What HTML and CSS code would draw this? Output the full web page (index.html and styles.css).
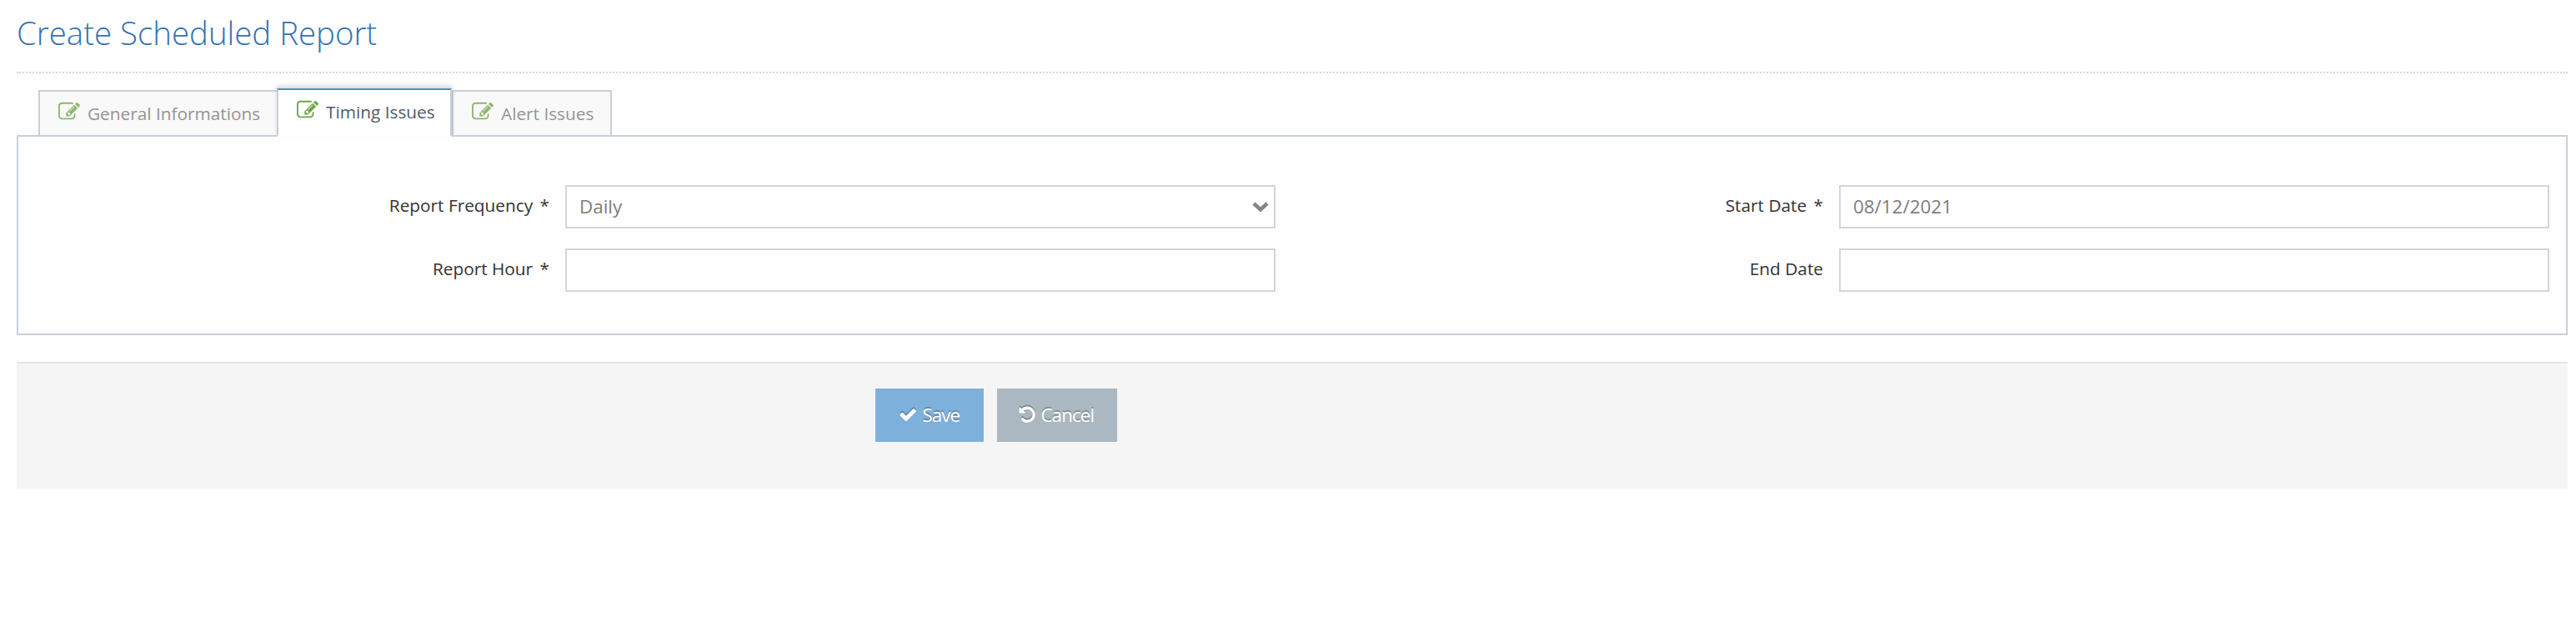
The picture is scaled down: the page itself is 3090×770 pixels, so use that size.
FILE: index.html
```html
<!DOCTYPE html>
<html lang="en">
<head>
<meta charset="utf-8">
<title>Create Scheduled Report</title>
<link rel="stylesheet" href="styles.css">
</head>
<body>
<svg class="sprite" aria-hidden="true">
  <symbol id="edit" viewBox="0 0 1792 1792"><path d="M888 1184l116-116-152-152-116 116v56h96v96h56zm440-720q-16-16-33 1l-350 350q-17 17-1 33t33-1l350-350q17-17 1-33zm80 594v190q0 119-84.500 203.500t-203.500 84.500h-832q-119 0-203.500-84.500t-84.500-203.500v-832q0-119 84.500-203.500t203.500-84.500h832q63 0 117 25 15 7 18 23 3 17-9 29l-49 49q-14 14-32 8-23-6-45-6h-832q-66 0-113 47t-47 113v832q0 66 47 113t113 47h832q66 0 113-47t47-113v-126q0-13 9-22l64-64q15-15 35-7t20 29zm-96-738l288 288-672 672h-288v-288zm444 132l-92 92-288-288 92-92q28-28 68-28t68 28l152 152q28 28 28 68t-28 68z"/></symbol>
  <symbol id="check" viewBox="0 0 1792 1792"><path d="M1671 566q0 40-28 68l-724 724-136 136q-28 28-68 28t-68-28l-136-136-362-362q-28-28-28-68t28-68l136-136q28-28 68-28t68 28l294 295 656-657q28-28 68-28t68 28l136 136q28 28 28 68z"/></symbol>
  <symbol id="undo" viewBox="0 0 1792 1792"><path d="M1664 896q0 156-61 298t-164 245-245 164-298 61q-172 0-327-72.500t-264-204.500q-7-10-6.500-22.500t8.500-20.500l137-138q10-9 25-9 16 2 23 12 73 95 179 147t225 52q104 0 198.500-40.500t163.500-109.500 109.500-163.500 40.500-198.500-40.500-198.500-109.500-163.500-163.500-109.500-198.500-40.500q-98 0-188 35.500t-160 101.500l137 138q31 30 14 69-17 40-59 40h-448q-26 0-45-19t-19-45v-448q0-42 40-59 39-17 69 14l130 129q107-101 244.500-156.500t284.500-55.500q156 0 298 61t245 164 164 245 61 298z"/></symbol>
</svg>
<main class="page">
  <h1 class="title">Create Scheduled Report</h1>
  <nav class="tabs">
    <a class="tab tab-general"><svg class="tab-icon"><use href="#edit"/></svg><span>General Informations</span></a>
    <a class="tab tab-timing active"><svg class="tab-icon"><use href="#edit"/></svg><span>Timing Issues</span></a>
    <a class="tab tab-alert"><svg class="tab-icon"><use href="#edit"/></svg><span>Alert Issues</span></a>
  </nav>
  <section class="panel">
    <div class="field">
      <label class="label">Report Frequency <span class="star">*</span></label>
      <div class="control"><span>Daily</span><svg class="chevron" viewBox="0 0 20 14"><path d="M2 3l8 7.500 8-7.500" fill="none" stroke="#858585" stroke-width="4.500"/></svg></div>
    </div>
    <div class="field">
      <label class="label">Start Date <span class="star">*</span></label>
      <div class="control"><span>08/12/2021</span></div>
    </div>
    <div class="field">
      <label class="label">Report Hour <span class="star">*</span></label>
      <div class="control"></div>
    </div>
    <div class="field">
      <label class="label">End Date</label>
      <div class="control"></div>
    </div>
  </section>
  <footer class="actions">
    <button class="btn save"><svg class="btn-icon"><use href="#check"/></svg><span>Save</span></button>
    <button class="btn cancel"><svg class="btn-icon"><use href="#undo"/></svg><span>Cancel</span></button>
  </footer>
</main>
</body>
</html>
```
FILE: styles.css
```css
* { box-sizing: border-box; }
body {
  margin: 0;
  background: #fefefe;
  color: #333;
  font-family: "Open Sans", "Noto Sans", sans-serif;
  font-size: 20.8px;
}
.sprite { display: none; }
.page { padding: 0 10px 0 20px; }
.title {
  height: 88px;
  margin: 0;
  padding: 13px 0 0;
  border-bottom: 2px dotted #d8d8d8;
  color: #3472ae;
  font-size: 38.4px;
  font-weight: 300;
  line-height: 52px;
}
.tabs {
  position: relative;
  display: flex;
  align-items: flex-end;
  height: 76px;
  margin-bottom: -2px;
  padding-left: 26px;
}
.tab {
  display: flex;
  height: 56px;
  padding: 10px 0 0 22px;
  gap: 9px;
  border: 2px solid #c5d0dc;
  background: #f9f9f9;
  color: #949494;
  line-height: 32px;
  white-space: nowrap;
}
.tab-general { width: 288px; margin-right: -2px; }
.tab-timing { width: 210px; }
.tab-alert { width: 192px; }
.tab.active {
  position: relative;
  height: 58px;
  border-top-color: #4c8fbd;
  border-bottom-color: #fefefe;
  background: #fefefe;
  box-shadow: 0 -3px 5px rgba(0, 0, 0, .15);
  color: #4f5b6b;
}
.tab-icon {
  flex: none;
  width: 26px;
  height: 26px;
  margin-top: 1px;
  fill: #69a040;
  opacity: .75;
}
.active .tab-icon { opacity: .95; }
.panel {
  display: grid;
  grid-template-columns: 1fr 1fr;
  gap: 24px 0;
  height: 240px;
  padding: 58px 20px 0 0;
  border: 2px solid #c5d0dc;
  align-content: start;
}
.field {
  display: flex;
  justify-content: flex-end;
  gap: 19px;
}
.field:nth-child(odd) { padding-right: 10px; }
.label { line-height: 48px; }
.star { margin-left: 3px; }
.control {
  display: flex;
  align-items: center;
  justify-content: space-between;
  width: 852px;
  height: 52px;
  padding: 0 6px 1px 15px;
  border: 2px solid #d5d5d5;
  color: #7d7d7d;
  font-size: 22.4px;
}
.chevron { width: 20px; height: 14px; }
.actions {
  display: flex;
  gap: 16px;
  height: 152px;
  margin-top: 32px;
  padding: 30px 0 0 1030px;
  border-top: 2px solid #e5e5e5;
  background: #f5f5f5;
}
.btn {
  display: flex;
  align-items: center;
  height: 64px;
  padding: 0 0 1px 28px;
  gap: 6px;
  border: 0;
  color: #fff;
  font: 22.4px "Open Sans", "Noto Sans", sans-serif;
  letter-spacing: -.9px;
  text-shadow: 0 -1.6px 0 rgba(0, 0, 0, .25);
}
.save { width: 130px; background: #7eb0dc; }
.cancel { width: 144px; padding-left: 25px; gap: 5px; background: #abb8c1; }
.btn-icon {
  width: 22.4px;
  height: 22.4px;
  fill: #fff;
  filter: drop-shadow(0 -1.6px 0 rgba(0, 0, 0, .25));
}
```
